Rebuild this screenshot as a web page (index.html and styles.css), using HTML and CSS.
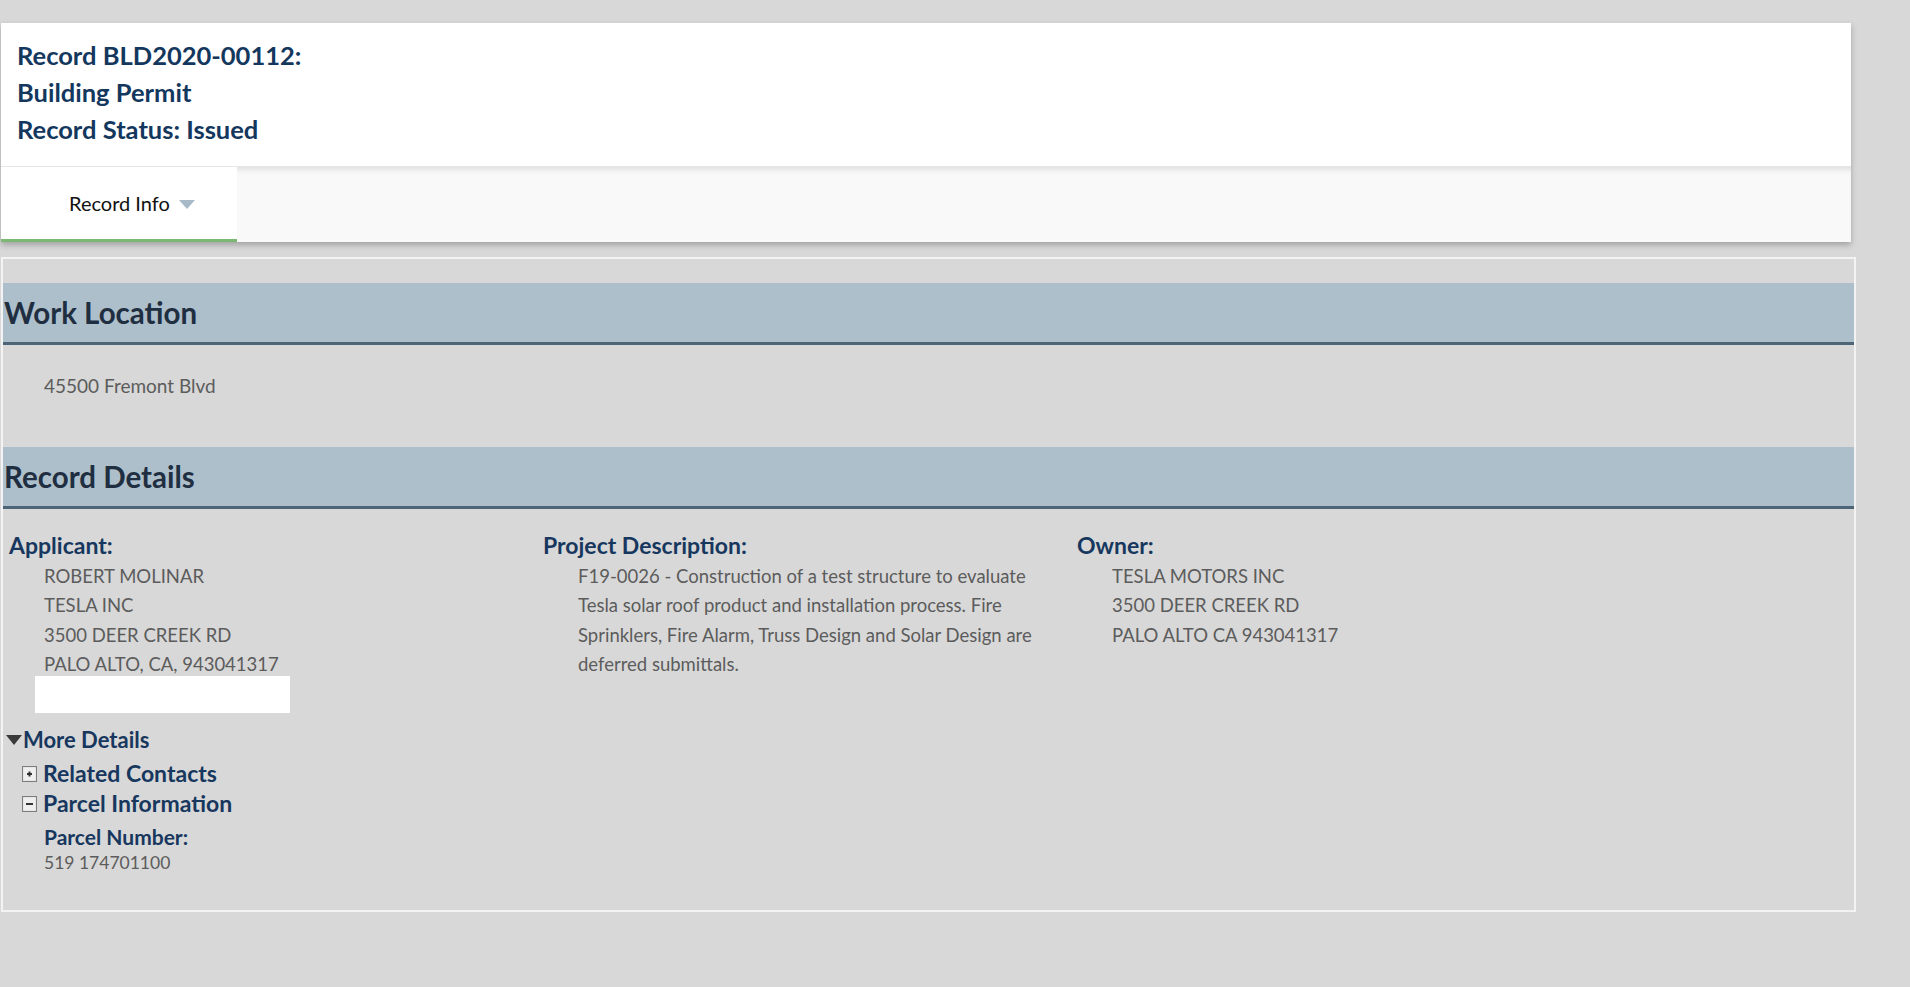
FILE: index.html
```html
<!DOCTYPE html>
<html>
<head>
    <title>Record BLD2020-00112</title>
    <link rel="stylesheet" href="styles.css">
</head>
<body>
    <div class="record-panel">
        <div class="record-header">
            <div class="record-title">Record BLD2020-00112:</div>
            <div class="record-title">Building Permit</div>
            <div class="record-title">Record Status: Issued</div>
        </div>
        <div class="tab-bar">
            <div class="tab active">
                Record Info
                <svg class="tab-caret" width="16" height="9" viewBox="0 0 16 9"><polygon points="0,0 16,0 8,9" fill="#a8bac8"/></svg>
            </div>
        </div>
    </div>

    <div class="content-box">
        <div class="section-band"><h2>Work Location</h2></div>
        <div class="work-address">45500 Fremont Blvd</div>

        <div class="section-band"><h2>Record Details</h2></div>
        <div class="details-grid">
            <div class="detail-col">
                <div class="label">Applicant:</div>
                <div class="value">
                    ROBERT MOLINAR<br>
                    TESLA INC<br>
                    3500 DEER CREEK RD<br>
                    PALO ALTO, CA, 943041317
                </div>
                <div class="redacted"></div>
            </div>
            <div class="detail-col">
                <div class="label">Project Description:</div>
                <div class="value desc">F19-0026 - Construction of a test structure to evaluate Tesla solar roof product and installation process. Fire Sprinklers, Fire Alarm, Truss Design and Solar Design are deferred submittals.</div>
            </div>
            <div class="detail-col">
                <div class="label">Owner:</div>
                <div class="value">
                    TESLA MOTORS INC<br>
                    3500 DEER CREEK RD<br>
                    PALO ALTO CA 943041317
                </div>
            </div>
        </div>

        <div class="more-details">
            <div class="more-toggle">
                <svg width="16" height="10" viewBox="0 0 16 10"><polygon points="0,0 16,0 8,10" fill="#3a3a3a"/></svg>
                More Details
            </div>
            <div class="sub-toggle first">
                <svg width="15" height="16" viewBox="0 0 15 16">
                    <rect x="0.5" y="0.5" width="14" height="15" fill="#dcdcdc" stroke="#7d7d7d"/>
                    <rect x="1.5" y="1.5" width="12" height="13" fill="#efefef"/>
                    <rect x="5" y="7" width="5" height="2" fill="#333"/>
                    <rect x="6.5" y="5.5" width="2" height="5" fill="#333"/>
                </svg>
                Related Contacts
            </div>
            <div class="sub-toggle">
                <svg width="15" height="16" viewBox="0 0 15 16">
                    <rect x="0.5" y="0.5" width="14" height="15" fill="#dcdcdc" stroke="#7d7d7d"/>
                    <rect x="1.5" y="1.5" width="12" height="13" fill="#efefef"/>
                    <rect x="4" y="7" width="7" height="2" fill="#333"/>
                </svg>
                Parcel Information
            </div>
            <div class="parcel">
                <div class="parcel-label">Parcel Number:</div>
                <div class="parcel-value">519 174701100</div>
            </div>
        </div>
    </div>
</body>
</html>
```

FILE: styles.css
```css
body {
    margin: 0;
    padding: 23px 0 0 1px;
    background-color: #d8d8d8;
    font-family: Lato, "Noto Sans", sans-serif;
}
.record-panel {
    width: 1850px;
    box-shadow: 0 3px 6px rgba(0, 0, 0, 0.25);
}
.record-header {
    background-color: #fff;
    padding: 14px 16px 18px;
    border-bottom: 1px solid #e6e6e6;
}
.record-title {
    font-size: 25.5px;
    font-weight: bold;
    line-height: 37px;
    color: #14375e;
}
.tab-bar {
    display: flex;
    height: 75px;
    background-color: #f9f9f9;
    box-shadow: inset 0 6px 6px -4px rgba(0, 0, 0, 0.12);
}
.tab {
    display: flex;
    align-items: center;
    gap: 9px;
    width: 168px;
    padding-left: 68px;
    font-size: 20px;
    color: #111;
}
.tab.active {
    background-color: #fff;
    border-bottom: 3px solid #7ab874;
}
.tab-caret {
    margin-top: 2px;
}
.content-box {
    width: 1851px;
    margin-top: 15px;
    padding: 24px 0 35px 0;
    border: 2px solid #f3f3f3;
}
.section-band {
    display: flex;
    align-items: center;
    height: 59px;
    background-color: #adbfcb;
    border-bottom: 3px solid #4e6577;
}
.section-band h2 {
    margin: 0;
    padding-left: 1px;
    font-size: 29.5px;
    font-weight: bold;
    color: #1f2e40;
}
.work-address {
    margin: 26px 0 47px;
    padding-left: 41px;
    font-size: 19px;
    line-height: 29px;
    color: #5c5c5c;
}
.details-grid {
    display: grid;
    grid-template-columns: 534px 534px auto;
    padding: 22px 0 0 6px;
}
.label {
    font-size: 23px;
    font-weight: bold;
    line-height: 29px;
    color: #17375e;
}
.value {
    margin-top: 2px;
    padding-left: 35px;
    font-size: 18.5px;
    line-height: 29.3px;
    color: #5c5c5c;
}
.value.desc {
    width: 490px;
}
.redacted {
    width: 255px;
    height: 37px;
    margin: -3px 0 0 26px;
    background-color: #fff;
}
.more-details {
    padding-top: 12px;
}
.more-toggle {
    display: flex;
    align-items: center;
    gap: 1px;
    padding-left: 3px;
    font-size: 22px;
    font-weight: bold;
    line-height: 29px;
    color: #17375e;
}
.sub-toggle {
    display: flex;
    align-items: center;
    gap: 6px;
    margin-top: 1px;
    padding-left: 19px;
    font-size: 23px;
    font-weight: bold;
    line-height: 29px;
    color: #17375e;
}
.sub-toggle.first {
    margin-top: 5px;
}
.parcel {
    padding: 4px 0 0 41px;
}
.parcel-label {
    font-size: 21px;
    font-weight: bold;
    line-height: 29px;
    color: #17375e;
}
.parcel-value {
    font-size: 17.5px;
    line-height: 24px;
    color: #5c5c5c;
}
```
